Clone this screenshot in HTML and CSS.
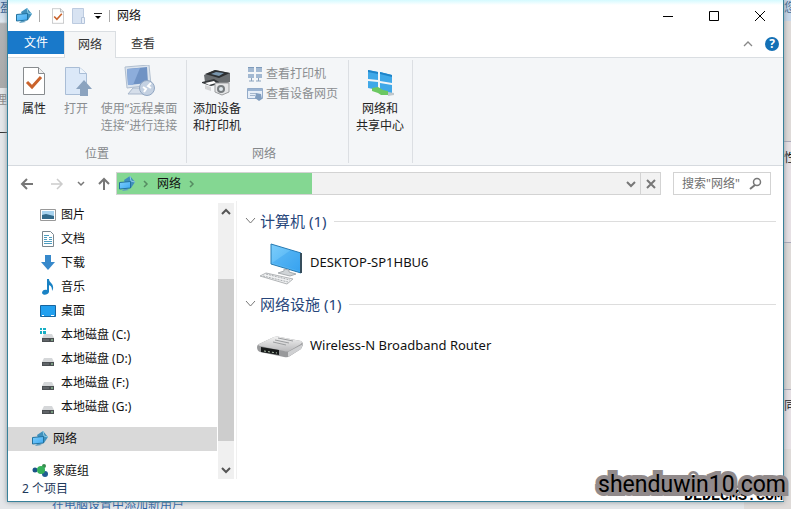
FILE: index.html
```html
<!DOCTYPE html>
<html lang="zh-CN">
<head>
<meta charset="utf-8">
<title>网络</title>
<link rel="stylesheet" href="styles.css">
</head>
<body>
<svg class="defs" aria-hidden="true">
  <defs>
    <linearGradient id="screen" x1="0" y1="0" x2="1" y2="1"><stop offset="0" stop-color="#7ccdfb"/><stop offset="1" stop-color="#3fa9f2"/></linearGradient>
    <linearGradient id="metal" x1="0" y1="0" x2="0" y2="1"><stop offset="0" stop-color="#f2f2f2"/><stop offset="1" stop-color="#b9b9bb"/></linearGradient>
    <symbol id="net" viewBox="0 0 16 16">
      <path d="M5 4L11 0L16 6L12 12L8 12Z" fill="#3f8fbb"/><path d="M11 0L12 5L16 6" stroke="#8ccbe4" fill="none"/>
      <path d="M.5 6.500L11.500 5.500V12L.5 13Z" fill="url(#screen)" stroke="#22729f"/><path d="M3 15L10 14L8 13H5Z" fill="#5b9cc0"/>
    </symbol>
    <symbol id="drive" viewBox="0 0 16 16"><path d="M4 7H12L14 11H2Z" fill="#d5d7d9"/><path d="M2 11H14V15H2Z" fill="#4b4f52"/><path d="M3 13H9" stroke="#777b7e"/><path d="M11 13H13" stroke="#a8e8ae"/></symbol>
    <symbol id="page" viewBox="0 0 22 28"><path d="M.5.500H15.500L21.500 6.500V27.500H.5Z" fill="#fff" stroke="#878b8e"/><path d="M15.500.500V6.500H21.500" fill="#eee" stroke="#878b8e"/></symbol>
    <symbol id="check" viewBox="0 0 22 28"><use href="#page"/><path d="M4 15L9 20L18 10" fill="none" stroke="#ca632c" stroke-width="3"/></symbol>
  </defs>
</svg>
<div class="desktop">
  <span class="behind b1">盈</span><span class="behind b2">理</span><span class="behind b3"></span>
  <span class="behind b4">您</span><span class="behind b5">性</span><span class="behind b6">同</span>
  <a class="behind b7" href="#">在电脑设置中添加新用户</a>

  <main class="window">
    <header class="titlebar">
      <svg class="i16" viewBox="0 0 16 16"><use href="#net"/></svg>
      <i class="bar"></i>
      <button class="quick" aria-label="属性"><svg width="12" height="16" viewBox="0 0 22 28"><use href="#check"/></svg></button>
      <button class="quick" aria-label="打开"><svg width="14" height="16" viewBox="0 0 14 16"><path d="M.5.500H11.500V15.500H.5Z" fill="#d8e3f2" stroke="#bccbe0"/><path d="M9.500 9.500H12.500V15.500H9.500Z" fill="#e7eef8" stroke="#b4c4db"/></svg></button>
      <button aria-label="自定义快速访问工具栏"><svg width="8" height="8" viewBox="0 0 8 8"><path d="M0 1.500H8" stroke="#222"/><path d="M1 4H7L4 7Z"/></svg></button>
      <i class="bar"></i>
      <h1>网络</h1>
      <div class="winbtns">
        <button aria-label="最小化"><svg width="12" height="12"><path d="M1 6.500H11" stroke="#000"/></svg></button>
        <button aria-label="最大化"><svg width="12" height="12"><path d="M1.500 1.500H10.500V10.500H1.500Z" fill="none" stroke="#000"/></svg></button>
        <button aria-label="关闭"><svg width="12" height="12"><path d="M1 1L11 11M11 1L1 11" stroke="#000"/></svg></button>
      </div>
    </header>

    <nav class="tabs">
      <button class="file">文件</button><button class="active">网络</button><button>查看</button>
      <div class="tabtools">
        <button aria-label="折叠功能区"><svg width="10" height="6"><path d="M1 5L5 1L9 5" fill="none" stroke="#888" stroke-width="1.300"/></svg></button>
        <button class="help" aria-label="帮助">?</button>
      </div>
    </nav>

    <section class="ribbon">
      <div class="group">
        <div class="tools">
          <button class="big"><svg width="32" height="32" viewBox="0 0 32 32"><use href="#check" x="5" y="2" width="22" height="28"/></svg><span>属性</span></button>
          <button class="big" disabled><svg width="32" height="32" viewBox="0 0 32 32"><path d="M5.500 2.500H19.500L26.500 8.500V29.500H5.500Z" fill="#dbe8f8" stroke="#a9bdd6"/><path d="M19.500 2.500V8.500H26.500" fill="#eff5fc" stroke="#a9bdd6"/><path d="M24 15L32 24H28V31H20V24H16Z" fill="#8ba3bf"/></svg><span>打开</span></button>
          <button class="big wide" disabled><svg width="32" height="32" viewBox="0 0 32 32"><path d="M2 2L26 0L28 20L4 23Z" fill="#dce4ee" stroke="#b1bfd0"/><path d="M4 4L24 2L25 18L5 20Z" fill="#6f92c4"/><path d="M4 4L17 3L10 20L5 20Z" fill="#8daddb"/><path d="M10 23H18L21 29H5Z" fill="#d5deea" stroke="#a8b7cb"/><circle cx="24" cy="23" r="7.500" fill="#c4d1e2" stroke="#92a7c3"/><path d="M20 22L23 24L21 27M28 18L25 21L28 23" fill="none" stroke="#fff" stroke-width="2"/></svg><span>使用“远程桌面<br>连接”进行连接</span></button>
        </div>
        <div class="caption">位置</div>
      </div>
      <div class="group second">
        <div class="tools">
          <button class="big mid"><svg width="32" height="32" viewBox="0 0 32 32"><path d="M3 10L14 5L29 8V17L18 21L4 17Z" fill="#6a6e71"/><path d="M4 9L14 5L29 8L18 13Z" fill="#2d3032"/><path d="M10 9L15 7L23 8L18 11Z" fill="#7895ad"/><path d="M1 17L13 14L18 17V19L10 21L1 18Z" fill="#33373a"/><path d="M4 18L13 16L15 18L8 20Z" fill="#fff"/><path d="M4 20L10 22V26L4 24Z" fill="#d3d4d5"/><path d="M14 18H28V27L21 30L14 27Z" fill="#e4e5e6" stroke="#9b9d9f"/><circle cx="20" cy="24" r="4" fill="#777c7f"/><circle cx="20" cy="24" r="2" fill="#dde5ea"/></svg><span>添加设备<br>和打印机</span></button>
          <div class="smalls">
            <button disabled><svg width="16" height="16"><path d="M1 1H7V6H1ZM9 1H15V6H9ZM1 8H7V12H1ZM9 8H15V12H9Z" fill="#a3b9d2"/><path d="M1 1H7V2H1ZM9 1H15V2H9Z" fill="#7f9bbb"/><path d="M2 15H7M9 15H14M4.500 12V15M11.500 12V15" fill="none" stroke="#8aa2bd"/></svg>查看打印机</button>
            <button disabled><svg width="16" height="16"><path d="M.5 2.500H15.500V12.500H.5Z" fill="#e6eef8" stroke="#93abc9"/><path d="M1 4H15" stroke="#9bb4d2" stroke-width="2"/><path d="M3 7.500H9M3 9.500H8" stroke="#a5b7cd"/><path d="M9 7L14 8L15 13L12 15L8 12Z" fill="#809dbf"/></svg>查看设备网页</button>
          </div>
        </div>
        <div class="caption">网络</div>
      </div>
      <div class="group third">
        <div class="tools">
          <button class="big wider"><svg width="32" height="32" viewBox="0 0 32 32"><path d="M4 5L14 7V15L4 14ZM16 7L28 10V18L16 16ZM4 16L14 17V25L4 23ZM16 18L28 20V29L16 26Z" fill="#3fa8e8"/><path d="M4 5L14 7V9L4 7ZM16 7L28 10V12L16 9Z" fill="#1e84c9"/><path d="M8 23L14 22L19 25L24 26V30L17 30L14 28L8 26Z" fill="#6cc862"/><path d="M24 27L30 28V30L24 31Z" fill="#bfc8cd"/></svg><span>网络和<br>共享中心</span></button>
        </div>
      </div>
    </section>

    <div class="navbar">
      <button aria-label="后退"><svg width="14" height="14"><path d="M13 7H2M7 2L2 7L7 12" fill="none" stroke="#777" stroke-width="2"/></svg></button>
      <button aria-label="前进"><svg width="14" height="14"><path d="M1 7H12M7 2L12 7L7 12" fill="none" stroke="#ccc" stroke-width="1.500"/></svg></button>
      <button class="narrow" aria-label="最近"><svg width="8" height="6"><path d="M1 1L4 4L7 1" fill="none" stroke="#777" stroke-width="1.500"/></svg></button>
      <button aria-label="向上"><svg width="14" height="14"><path d="M7 13V2M2 7L7 2L12 7" fill="none" stroke="#777" stroke-width="2"/></svg></button>
      <div class="address">
        <svg class="i16" viewBox="0 0 16 16"><use href="#net"/></svg>
        <svg width="6" height="8"><path d="M1 1L4 4L1 7" fill="none" stroke="#568c62" stroke-width="1.500"/></svg>
        <a href="#">网络</a>
        <svg width="6" height="8"><path d="M1 1L4 4L1 7" fill="none" stroke="#568c62" stroke-width="1.500"/></svg>
        <button class="drop" aria-label="历史"><svg width="10" height="8"><path d="M1 2L5 6L9 2" fill="none" stroke="#777" stroke-width="2"/></svg></button>
        <button class="stop" aria-label="停止"><svg width="10" height="10"><path d="M1 1L9 9M9 1L1 9" stroke="#777" stroke-width="2"/></svg></button>
      </div>
      <label class="search"><input type="text" placeholder='搜索"网络"' aria-label="搜索"><svg width="13" height="13"><circle cx="8" cy="5" r="3.500" fill="none" stroke="#777" stroke-width="1.500"/><path d="M6 8L1 12" stroke="#777" stroke-width="2"/></svg></label>
    </div>

    <div class="body">
      <aside>
        <ul>
          <li><svg class="i16" viewBox="0 0 16 16"><path d="M.5 2.500H15.500V13.500H.5Z" fill="#fff" stroke="#999"/><path d="M2 4H14V12H2Z" fill="#a8d3ef"/><path d="M2 8L6 7L14 9V12H2Z" fill="#326a8b"/></svg>图片</li>
          <li><svg class="i16" viewBox="0 0 16 16"><path d="M2.500.500H10.500L13.500 3.500V15.500H2.500Z" fill="#fff" stroke="#79868e"/><path d="M4 4.500H9M4 6.500H7M9 6.500H12M4 8.500H7M9 8.500H12M4 10.500H12M4 12.500H12" stroke="#4e9dc0"/></svg>文档</li>
          <li><svg class="i16" viewBox="0 0 16 16"><path d="M5 0H11V7H15L8 15L1 7H5Z" fill="#3789cb"/></svg>下载</li>
          <li><svg class="i16" viewBox="0 0 16 16"><path d="M7 0H9C9 4 14 4 13 10L12 12C12 8 11 7 9 6V13C8 16 3 17 2 14C2 11 5 10 7 11Z" fill="#1982c4"/></svg>音乐</li>
          <li><svg class="i16" viewBox="0 0 16 16"><path d="M.5 2.500H15.500V13.500H.5Z" fill="#22a0ef" stroke="#17649e"/><path d="M2 12.500H4M11 12.500H14" stroke="#fff"/></svg>桌面</li>
          <li><svg class="i16" viewBox="0 0 16 16"><use href="#drive"/><path d="M0 1H2V3H0ZM3 1H6V3H3ZM0 4H2V7H0ZM3 4H6V7H3Z" fill="#17afc5"/></svg>本地磁盘 (C:)</li>
          <li><svg class="i16" viewBox="0 0 16 16"><use href="#drive"/></svg>本地磁盘 (D:)</li>
          <li><svg class="i16" viewBox="0 0 16 16"><use href="#drive"/></svg>本地磁盘 (F:)</li>
          <li><svg class="i16" viewBox="0 0 16 16"><use href="#drive"/></svg>本地磁盘 (G:)</li>
          <li class="root selected"><svg class="i16" viewBox="0 0 16 16"><use href="#net"/></svg>网络</li>
          <li class="root"><svg class="i16" viewBox="0 0 16 16"><path d="M3 7L12 3V12L8 7" stroke="#75b9d2" fill="none"/><circle cx="3" cy="7" r="2.500" fill="#1b5587"/><circle cx="12" cy="3" r="2" fill="#398c4e"/><circle cx="13" cy="11" r="3" fill="#205c93"/><circle cx="9" cy="7" r="4" fill="#35b25a"/></svg>家庭组</li>
        </ul>
        <div class="scroll">
          <svg width="10" height="8"><path d="M1 6L5 2L9 6" fill="none" stroke="#555" stroke-width="2"/></svg>
          <div class="track"><div class="thumb"></div></div>
          <svg width="10" height="8"><path d="M1 2L5 6L9 2" fill="none" stroke="#555" stroke-width="2"/></svg>
        </div>
      </aside>
      <section class="files">
        <h2><svg width="11" height="8"><path d="M1 1L5.500 6L10 1" fill="none" stroke="#777"/></svg>计算机 (1)</h2>
        <div class="item"><svg width="48" height="48" viewBox="0 0 48 48"><path d="M14 6L44 15V35L14 26Z" fill="url(#screen)" stroke="#267ab2"/><path d="M44 15V35" stroke="#364d5c" stroke-width="2"/><path d="M15 25L34 12L43 15V33Z" fill="#168ce6" opacity=".25"/><path d="M27 31L32 32V34L39 36L33 38L21 35L27 33Z" fill="#d0d4d7" stroke="#a8adb0"/><path d="M3 38L9 35L36 41L30 46Z" fill="#f0f1f2" stroke="#b2b5b7"/><path d="M6 38L31 44M9 36L33 42" stroke="#a9adb0" stroke-dasharray="2 1"/></svg>DESKTOP-SP1HBU6</div>
        <h2><svg width="11" height="8"><path d="M1 1L5.500 6L10 1" fill="none" stroke="#777"/></svg>网络设施 (1)</h2>
        <div class="item"><svg width="48" height="48" viewBox="0 0 48 48"><path d="M0 26Q0 24 2 23L17 16Q20 15 23 16L44 20Q46 21 46 24L44 28L33 35Q31 37 27 36L3 31Q0 30 0 26Z" fill="#98999b"/><path d="M2 23L17 16Q20 15 23 16L44 20Q46 21 44 23L32 30Q30 31 27 30L3 25Q0 24 2 23Z" fill="url(#metal)"/><path d="M31 31L46 23L44 28L31 36Z" fill="#cfd0d2"/><path d="M4 26L22 29V34L4 31Z" fill="#171a1a"/><path d="M7 30L20 32" stroke="#b6c8b2" stroke-dasharray="2 2"/><path d="M18 19L32 22M21 17L36 20M16 21L29 24" stroke="#9b9d9f"/></svg>Wireless-N Broadband Router</div>
      </section>
    </div>
    <footer>2 个项目</footer>
  </main>
  <div class="mark2">DEDECMS.COM</div>
  <div class="mark">shenduwin10.com</div>
</div>
</body>
</html>
```
FILE: styles.css
```css
* { box-sizing: border-box; }
body { margin: 0; font: 12px/16px "Noto Sans", "Noto Sans CJK SC", sans-serif; color: #111; }
button { display: flex; align-items: center; justify-content: center; margin: 0; padding: 0; border: 0; background: none; font: inherit; color: inherit; }
svg { display: block; flex: none; }
a { color: inherit; text-decoration: none; }
.defs { position: absolute; width: 0; height: 0; }
.i16 { width: 16px; height: 16px; }

.desktop { position: relative; height: 100vh; overflow: hidden; padding: 0 7px 7px; background: linear-gradient(90deg, #e4e6e9 0 94%, #dedad8 94%); }
.behind { position: absolute; color: #333; }
.b1 { left: 0; top: 0; width: 7px; height: 88px; background: linear-gradient(#b9d0e6, #dfe7ef 25%, #b3b4b6 27%, #aaa); color: #345d91; }
.b2 { left: -5px; top: 92px; color: #8a8a8a; }
.b3 { left: 0; top: 132px; width: 7px; height: 1px; background: #333; }
.b4 { right: -5px; top: 0; height: 21px; width: 12px; background: #c6d7ea; color: #47698f; }
.b5, .b6 { right: -5px; top: 141px; width: 12px; height: 102px; padding-top: 8px; border: 1px solid #aab; border-width: 1px 0; background: #e6e0e4; color: #111; }
.b6 { top: 389px; height: 60px; border-bottom: 0; }
.b7 { left: 52px; bottom: -4px; color: #2b62a4; }

.window { position: relative; display: flex; flex-direction: column; height: 100%; border: 1px solid #38819a; border-top: 0; background: #fff; box-shadow: 0 0 5px #8a949a; }
.titlebar { display: flex; align-items: center; height: 31px; padding-left: 8px; background: linear-gradient(#d4faff, #fff 5px); }
.bar { width: 1px; height: 12px; margin: 0 7px; background: #aaa; }
.titlebar .bar:nth-of-type(1) { margin-right: 12px; }
.quick { margin-right: 8px; }
h1 { margin: 0; font-size: 12px; font-weight: 400; }
.winbtns { display: flex; margin-left: auto; }
.winbtns button { width: 46px; height: 30px; }

.tabs { display: flex; height: 27px; border-bottom: 1px solid #dadee2; }
.tabs > button { width: 54px; height: 25px; color: #333; }
.tabs > .file { width: 56px; height: 23px; background: #1979ca; color: #fff; }
.tabs > .active { width: 52px; height: 27px; border: 1px solid #dadee2; border-bottom: 0; background: #f5f6f7; }
.tabtools { display: flex; align-items: center; gap: 12px; margin-left: auto; padding-right: 4px; }
.tabtools .help { width: 14px; height: 14px; border-radius: 50%; background: #1470b5; color: #fff; font-weight: 700; }

.ribbon { display: flex; height: 108px; padding: 2px 0; border-bottom: 1px solid #d6dadf; background: #f4f6f8; }
.group { display: flex; flex-direction: column; padding: 5px 5px 0; border-right: 1px solid #dcdfe3; }
.group.second { padding: 5px 10px 0 3px; }
.group.third { padding: 5px 2px 0 1px; }
.tools { display: flex; align-items: flex-start; flex: 1; }
.big { flex-direction: column; width: 42px; gap: 3px; line-height: 17px; color: #222; }
.big.wide { width: 84px; }
.big.mid { width: 54px; }
.big.wider { width: 60px; }
.big:disabled, .smalls button:disabled { color: #8b8e91; }
.smalls { padding-left: 3px; }
.smalls button { gap: 3px; height: 22px; }
.smalls button:first-child { height: 18px; }
.caption { height: 17px; text-align: center; color: #85888b; }

.navbar { display: flex; align-items: center; height: 35px; padding: 0 12px 0 8px; }
.navbar > button { width: 22px; height: 22px; margin-right: 8px; }
.navbar > .narrow { width: 10px; margin-right: 7px; }
.navbar > .narrow + button { margin-right: 1px; }
.address { display: flex; align-items: center; flex: 1; height: 23px; padding-left: 2px; gap: 8px; border: 1px solid #d3d3d3; background: linear-gradient(90deg, #84d792 36%, #f2f2f2 36%); }
.address .drop { margin-left: auto; }
.address .stop { width: 20px; height: 100%; margin-left: -4px; border-left: 1px solid #d3d3d3; }
.search { display: flex; align-items: center; width: 98px; height: 23px; margin-left: 12px; padding: 0 8px; border: 1px solid #d3d3d3; }
.search input { flex: 1; min-width: 0; padding: 0; border: 0; outline: 0; font: inherit; }
.search input::placeholder { color: #707070; opacity: 1; }

.body { display: flex; flex: 1; min-height: 0; }
aside { display: flex; width: 229px; border-right: 1px solid #f0f0f0; padding-top: 2px; }
ul { flex: 1; margin: 0; padding: 0; list-style: none; overflow: hidden; }
li { display: flex; align-items: center; gap: 5px; height: 24px; padding-left: 32px; }
li.root { margin-top: 8px; padding-left: 24px; }
li.selected { background: #d9d9d9; }
.scroll { display: flex; flex-direction: column; align-items: center; width: 16px; margin: 0 2px 0 1px; padding: 5px 0; background: #f0f0f0; }
.track { flex: 1; width: 100%; padding: 63px 0 25px; }
.thumb { height: 100%; background: #cdcdcd; }
.files { flex: 1; padding: 8px 7px 0 8px; }
h2 { display: flex; align-items: center; gap: 4px; margin: 0; height: 24px; font-size: 15px; font-weight: 400; color: #28477b; }
h2::after { content: ""; flex: 1; height: 1px; margin-left: 4px; background: #ddd; }
.item { display: flex; align-items: center; gap: 5px; height: 59px; padding: 0 0 1px 12px; font-size: 13px; }
footer { height: 22px; padding: 2px 14px; color: #1e395b; }

.mark, .mark2 { position: absolute; right: 5px; bottom: 4px; color: #000; white-space: nowrap; paint-order: stroke fill; }
.mark { font: 23px/40px Roboto, sans-serif; -webkit-text-stroke: 8px #918a8b; stroke-linejoin: round; }
.mark2 { right: 8px; bottom: 4px; font: 700 15px/16px "Liberation Mono", monospace; -webkit-text-stroke: 2px #fff; }
```
